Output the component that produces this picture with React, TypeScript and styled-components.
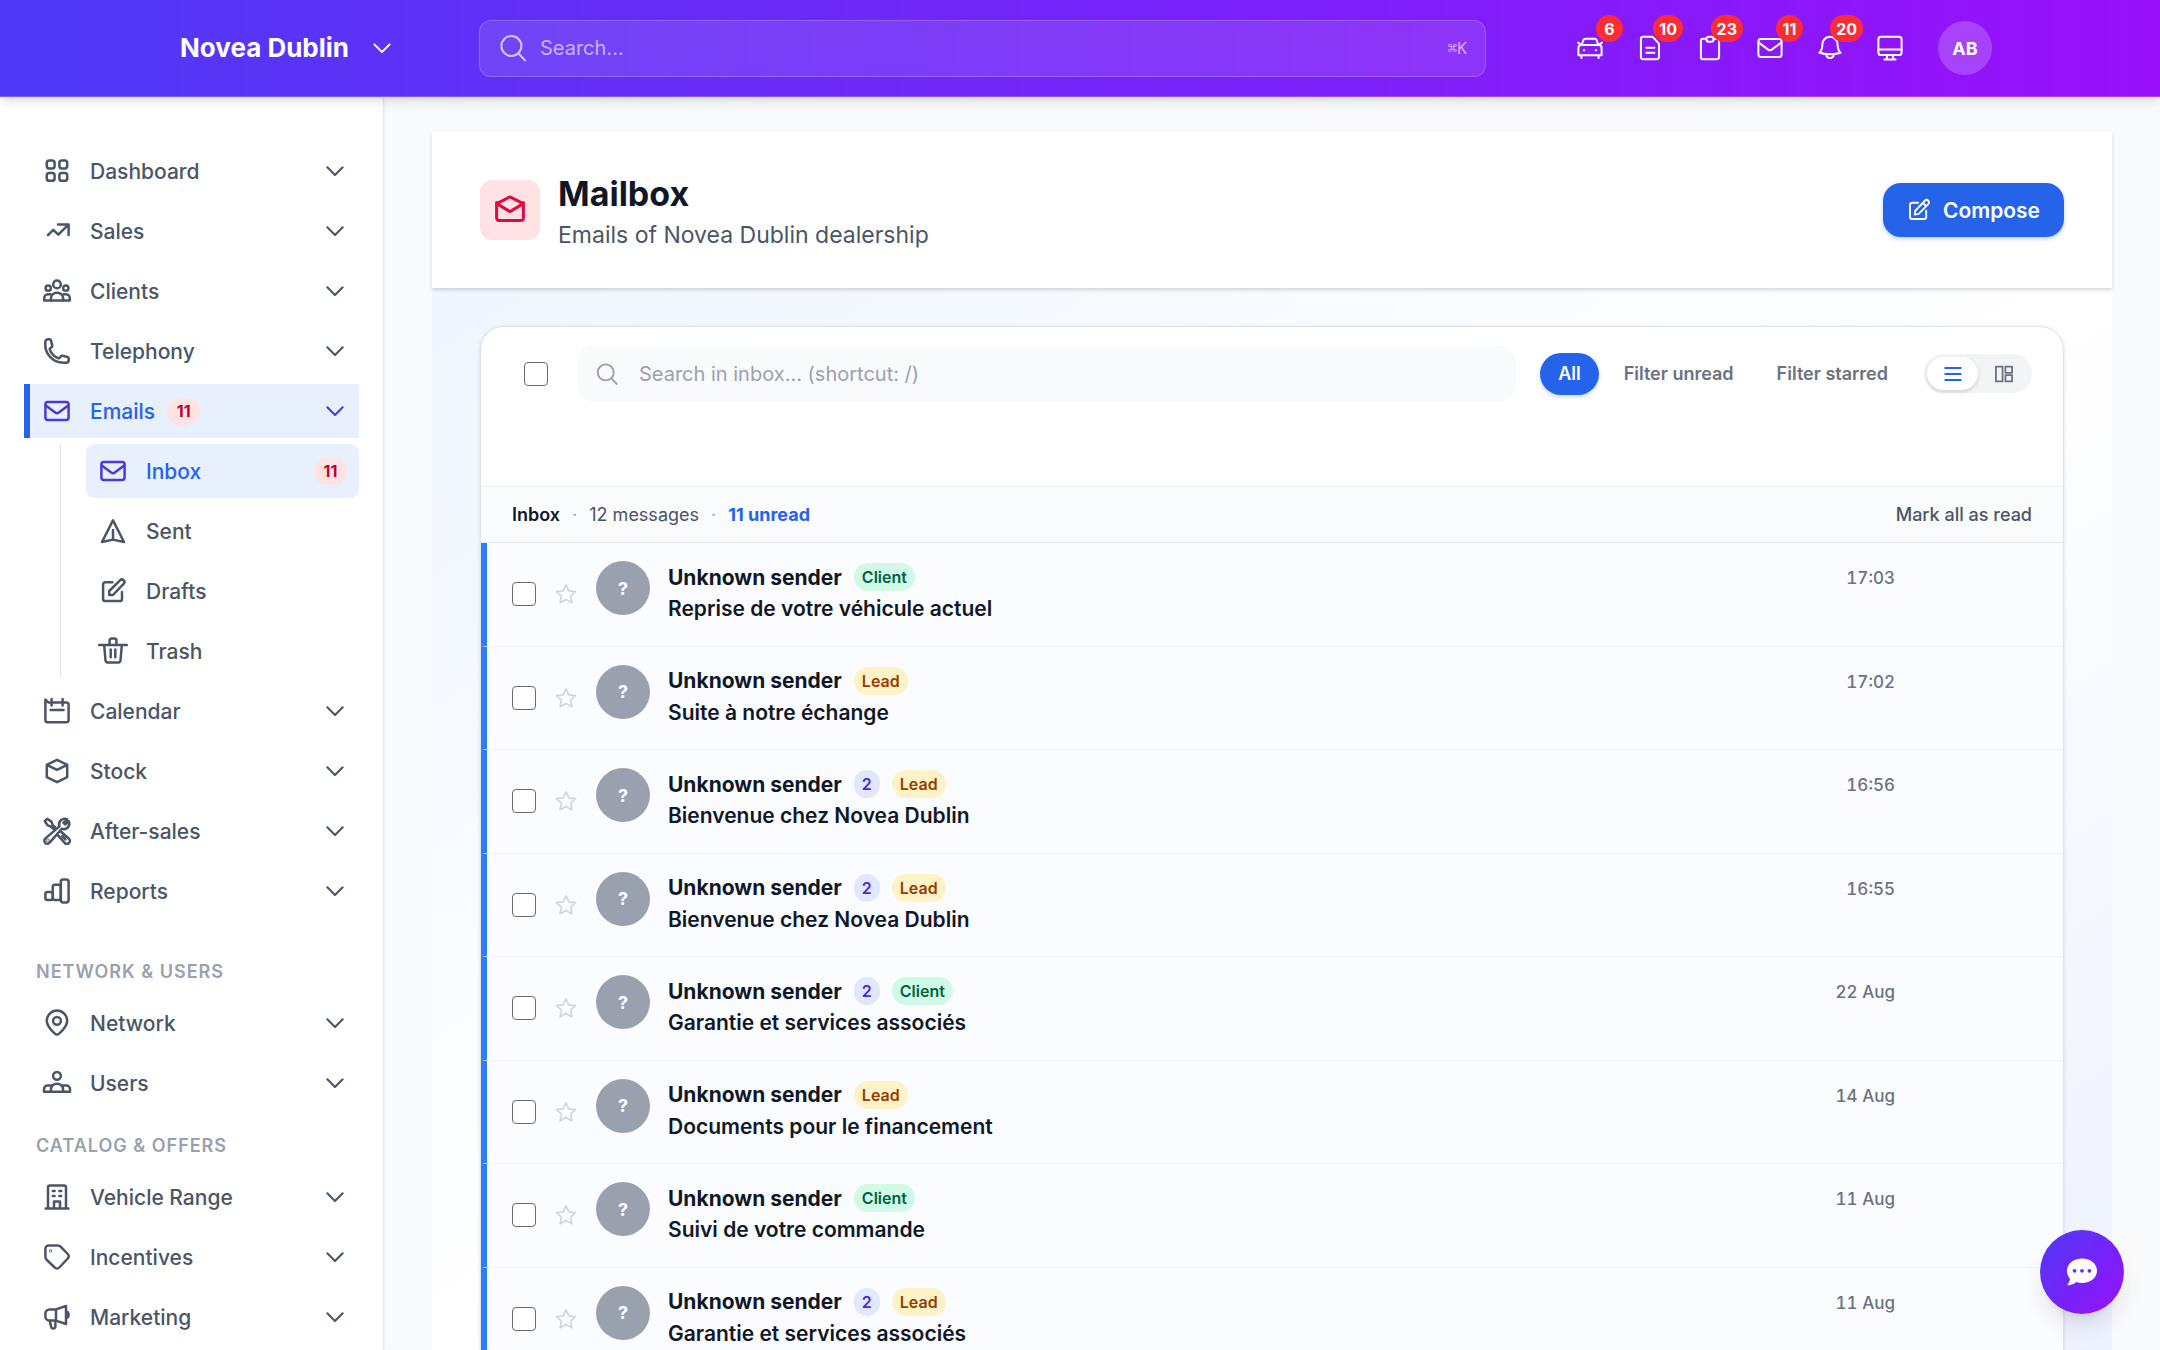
import React from "react";
import styled, { createGlobalStyle, css } from "styled-components";

/* ---------- icons: 30 x 30 line drawings ---------- */

const shapes = {
  dashboard: (
    <>
      <rect x="4.8" y="4.6" width="7.8" height="7.8" rx="2.4" />
      <rect x="17.4" y="4.6" width="7.8" height="7.8" rx="2.4" />
      <rect x="4.8" y="17" width="7.8" height="7.8" rx="2.4" />
      <rect x="17.4" y="17" width="7.8" height="7.8" rx="2.4" />
    </>
  ),
  trend: <path d="M6 19.2 11.3 13.8 16.3 18.6 26.2 8.8M16 8.4H26.6V19" />,
  group: (
    <>
      <circle cx="15" cy="8.4" r="3.8" />
      <circle cx="6.2" cy="12.2" r="2.6" />
      <circle cx="23.8" cy="12.2" r="2.6" />
      <path d="M8.9 24.4V22a6.1 5.2 0 0 1 12.2 0v2.4" />
      <path d="M8.4 18.2H6a3.9 3.9 0 0 0-3.8 4v2.2h25.6v-2.2a3.9 3.9 0 0 0-3.8-4h-2.4" />
    </>
  ),
  phone: (
    <path
      transform="translate(.6 .6) scale(1.2)"
      strokeWidth="2.1"
      d="M2.25 6.75c0 8.284 6.716 15 15 15h2.25a2.25 2.25 0 0 0 2.25-2.25v-1.372c0-.516-.351-.966-.852-1.091l-4.423-1.106c-.44-.11-.902.055-1.173.417l-.97 1.293c-.282.376-.769.542-1.21.38a12.035 12.035 0 0 1-7.143-7.143c-.162-.441.004-.928.38-1.21l1.293-.97c.363-.271.527-.734.417-1.173L6.963 3.102a1.125 1.125 0 0 0-1.091-.852H4.5A2.25 2.25 0 0 0 2.25 4.5v2.25Z"
    />
  ),
  mail: (
    <>
      <rect x="3.4" y="6" width="23.2" height="18" rx="2.4" />
      <path d="M3.8 9.6 13.2 16.6Q15 18 16.8 16.6L26.2 9.6" />
    </>
  ),
  send: <path d="M15 4.4 4 26 15 23.6 26 26ZM15 14v9.4" />,
  edit: (
    <>
      <path d="M14.4 6.3H7.3a2.2 2.2 0 0 0-2.2 2.2v14.4a2.2 2.2 0 0 0 2.2 2.2h14.5a2.2 2.2 0 0 0 2.2-2.2V16" />
      <path d="M11.2 19v-4L22 4.3a2.5 2.5 0 0 1 3.6 3.6L15 19Z" />
    </>
  ),
  trash: (
    <>
      <path d="M1 9h28M11.6 8.6V4.4a1.9 1.9 0 0 1 1.9-1.900h3a1.900 1.900 0 0 1 1.900 1.900v4.200" />
      <path d="M6.2 9.4 7.5 24.4a2.2 2.2 0 0 0 2.2 2h10.6a2.2 2.2 0 0 0 2.2-2l1.3-15M12.7 13.6v7.6M17.3 13.6v7.6" />
    </>
  ),
  calendar: (
    <>
      <path d="M3.4 3.6v20.3a2.3 2.3 0 0 0 2.3 2.3h18.6a2.3 2.3 0 0 0 2.3-2.3V8.7a2.3 2.3 0 0 0-2.3-2.3H6.4Z" />
      <path d="M9.6 3v6.6M20.6 3v6.6M8.6 14h13" />
    </>
  ),
  box: <path d="M15 3.8 25.2 8.8V21.2L15 26.2 4.8 21.2V8.8ZM4.8 8.8 15 13.8 25.2 8.8" />,
  tools: (
    <>
      <path d="M12 13.4 8.6 10.4 5.6 9.4 2.8 5.2 5.2 2.8 9.4 5.6 10.6 8.8 13.4 11.4" />
      <path d="M25.2 3.4A5.6 5.6 0 0 0 17.4 10.4L3.2 22.6a2.9 2.9 0 0 0 4.2 4.2L19.8 12.8A5.6 5.6 0 0 0 26.8 5.2L23.4 8.4 21.4 6.8Z" />
      <path d="M19.4 16 27 22.8a2.9 2.9 0 0 1-4.2 4.2L16.2 19.6M20.2 20.2l3.2 3.2" />
      <circle cx="5.9" cy="24.2" r=".4" />
    </>
  ),
  bars: (
    <>
      <rect x="3.4" y="16" width="7.4" height="8" rx="2" />
      <rect x="10.8" y="8.8" width="8" height="15.2" rx="2" />
      <rect x="18.8" y="3.6" width="7.8" height="22.8" rx="2.4" />
    </>
  ),
  pin: (
    <>
      <path d="M15 26.6c-.9 0-1.6-.5-2.4-1.2C9.8 22.9 4.8 18.4 4.8 12.8a10.2 10.2 0 0 1 20.4 0c0 5.6-5 10.1-7.8 12.6-.8.7-1.5 1.2-2.4 1.2Z" />
      <circle cx="15" cy="12.8" r="3.9" />
    </>
  ),
  users: (
    <>
      <circle cx="15" cy="7.8" r="3.9" />
      <path d="M8.9 23.8v-2.4a6.1 5.6 0 0 1 12.2 0v2.4" />
      <path d="M9.4 17.6H5.6a3.6 3.6 0 0 0-3.6 3.6v2.6h26v-2.6a3.6 3.6 0 0 0-3.6-3.6h-3.8" />
    </>
  ),
  building: (
    <>
      <path d="M3.6 26.6h22.8M6 26.4V5.6a2 2 0 0 1 2-2h14a2 2 0 0 1 2 2v20.8M12 26.4v-6.8h6v6.8" />
      <path d="M10.8 9h1.8M17.4 9h1.8M10.8 14h1.8M17.4 14h1.8" />
    </>
  ),
  tag: (
    <>
      <path d="M3.4 6.8a3.4 3.4 0 0 1 3.4-3.4h9a4 4 0 0 1 2.8 1.2l7.2 7.4a3.2 3.2 0 0 1 0 4.5l-8.5 9a3.2 3.2 0 0 1-4.6 0L4.9 18a4 4 0 0 1-1.500-3Z" />
      <circle cx="8.6" cy="8.8" r=".4" />
    </>
  ),
  megaphone: (
    <>
      <path d="M14 7.4H7.6a4.2 4.2 0 0 0-4.2 4.2v2.8a4.2 4.2 0 0 0 4.2 4.2H14ZM14 7.4 24 4v18l-10-3.4M24 9.4a3.4 3.4 0 0 1 2.6 3.4A3.4 3.4 0 0 1 24 16.2" />
      <path d="M7.8 18.8 9.2 25a2 2 0 0 0 2 1.6 2.4 2.4 0 0 0 2.2-2.8V18.8" />
    </>
  ),
  car: (
    <>
      <path d="M6.6 12 8.4 7.2a2.2 2.2 0 0 1 2-1.4h9.2a2.2 2.2 0 0 1 2 1.4L23.4 12M3 9.6l3 2M27 9.6l-3 2" />
      <path d="M6.4 12h17.2a3 3 0 0 1 3 3v7.2H3.4V15a3 3 0 0 1 3-3ZM6.4 22.4V25M23.6 22.4V25" />
      <path d="M8.8 17.3h.4M20.8 17.3h.4" />
    </>
  ),
  doc: (
    <path d="M8.2 3.8h8.6a2 2 0 0 1 1.4.6l5.2 5.6a2 2 0 0 1 .6 1.4v12.6a2.3 2.3 0 0 1-2.3 2.3H8.2a2.3 2.3 0 0 1-2.3-2.3V6.1a2.3 2.3 0 0 1 2.3-2.3ZM11.4 14.7h8M11.4 19.7h8" />
  ),
  clipboard: (
    <>
      <path d="M11 5.8H8.2a2.3 2.3 0 0 0-2.3 2.3v15.8a2.3 2.3 0 0 0 2.3 2.3h13.6a2.3 2.3 0 0 0 2.3-2.3V8.1a2.3 2.3 0 0 0-2.3-2.3H19" />
      <rect x="11.4" y="3.8" width="7.2" height="5" rx="2.5" />
    </>
  ),
  bell: (
    <path d="M4.4 19.8c2.6-2.6 3-5.2 3-8.6a7.6 7.4 0 0 1 15.2 0c0 3.4.4 6 3 8.6-3.4 1.1-6.8 1.5-10.6 1.5s-7.2-.4-10.6-1.5ZM11 21.6a4.1 4.4 0 0 0 8 0" />
  ),
  monitor: (
    <>
      <rect x="3.4" y="3.8" width="23.2" height="18.2" rx="2.6" />
      <path d="M3.4 16.4h23.2M12.4 22l-.8 4.4M17.6 22l.8 4.4M9.4 26.6h11.2" />
    </>
  ),
  mailOpen: (
    <>
      <path d="M1.8 8.6 15 1.9 28.2 8.6 15 16.6Z" />
      <path d="M1.6 7.4V23a2.6 2.6 0 0 0 2.6 2.6h21.6a2.6 2.6 0 0 0 2.6-2.6V7.4" />
    </>
  ),
  compose: (
    <>
      <path d="M14 6H6.400A2.600 2.600 0 0 0 3.800 8.600v15A2.600 2.600 0 0 0 6.400 26.200h15a2.600 2.600 0 0 0 2.600-2.600V16" />
      <path d="M9.600 20.800l.9-5L22.400 3.400a2.900 2.900 0 0 1 4.200 4.200L14.600 19.900ZM20 6.200l4 4" />
    </>
  ),
  search: <path d="M21 21 27 27.4M23.4 13A10 10 0 1 1 3.4 13a10 10 0 0 1 20 0Z" />,
  chevron: <path d="M5.4 10.4 15 20l9.6-9.6" />,
  star: (
    <path d="M15 3.6 18.5 11 26.8 12 20.7 17.6 22.3 25.8 15 21.8 7.7 25.8 9.3 17.6 3.2 12 11.5 11Z" />
  ),
  list: <path d="M2 5h26M2 15h26M2 25h26" />,
  columns: (
    <path d="M1.6 2.6h11v24.8h-11ZM17.4 2.6h11v10.6h-11ZM17.4 16.8h11v10.6h-11Z" />
  ),
};

type IconName = keyof typeof shapes;

const Svg = styled.svg<{ $size: number }>`
  display: block;
  flex: none;
  width: ${(p) => p.$size}px;
  height: ${(p) => p.$size}px;
  fill: none;
  stroke: currentColor;
  stroke-linecap: round;
  stroke-linejoin: round;
`;

function Icon({ name, size = 30, weight = 2.5 }: { name: IconName; size?: number; weight?: number }) {
  return (
    <Svg viewBox="0 0 30 30" $size={size} strokeWidth={weight} aria-hidden="true">
      {shapes[name]}
    </Svg>
  );
}

/* ---------- page frame ---------- */

const GlobalStyle = createGlobalStyle`
  *, *::before, *::after { box-sizing: border-box; }
  body { margin: 0; background: #f9fafb; }
  body, button, input { font-family: Inter, "Liberation Sans", sans-serif; }
  button { border: 0; padding: 0; background: none; color: inherit; cursor: pointer; }
  ul { list-style: none; margin: 0; padding: 0; }
  h1, h2, p { margin: 0; }
  a { color: inherit; text-decoration: none; }
`;

const Page = styled.div`
  display: flex;
  flex-direction: column;
  height: 100vh;
  overflow: hidden;
  color: #101828;
  font-size: 21px;
`;

const Body = styled.div`
  display: flex;
  flex: 1;
  min-height: 0;
`;

/* ---------- top bar ---------- */

const TopBar = styled.header`
  position: relative;
  z-index: 2;
  flex: none;
  border-bottom: 1px solid rgba(255, 255, 255, 0.2);
  background: linear-gradient(to right, #4f39f6, #9810fa);
  box-shadow: 0 6px 9px -1px rgba(0, 0, 0, 0.1), 0 3px 6px -3px rgba(0, 0, 0, 0.1);
  color: #fff;
`;

const TopInner = styled.div`
  display: flex;
  align-items: center;
  max-width: 1824px;
  height: 96px;
  margin: 0 auto;
`;

const StoreColumn = styled.div`
  flex: none;
  width: 311px;
`;

const StoreButton = styled.button`
  display: flex;
  align-items: center;
  gap: 21px;
  padding: 6px 12px;
  font-size: 26px;
  line-height: 36px;
  font-weight: 700;
`;

const GlobalSearch = styled.label`
  display: flex;
  flex: 1;
  align-items: center;
  gap: 12px;
  height: 57px;
  padding: 0 18px;
  border: 1px solid rgba(255, 255, 255, 0.2);
  border-radius: 12px;
  background: rgba(255, 255, 255, 0.1);
  color: rgba(255, 255, 255, 0.7);
`;

const searchField = css`
  flex: 1;
  min-width: 0;
  padding: 0;
  border: 0;
  outline: 0;
  background: none;
  font-size: 20px;
  line-height: 30px;
`;

const GlobalInput = styled.input`
  ${searchField}
  color: #fff;
  &::placeholder { color: rgba(255, 255, 255, 0.6); opacity: 1; }
`;

const Shortcut = styled.kbd`
  color: rgba(255, 255, 255, 0.6);
  font-family: "DejaVu Sans Mono", monospace;
  font-size: 16px;
`;

const TopActions = styled.nav`
  display: flex;
  flex: none;
  align-items: center;
  justify-content: flex-end;
  gap: 6px;
  width: 506px;
`;

const TopButton = styled.button`
  position: relative;
  display: grid;
  place-items: center;
  width: 54px;
  height: 54px;
`;

const Count = styled.span`
  position: absolute;
  top: -6px;
  right: -6px;
  min-width: 27px;
  height: 27px;
  padding: 0 6px;
  border-radius: 14px;
  background: #fb2c36;
  font-size: 16px;
  line-height: 28px;
  font-weight: 700;
  text-align: center;
`;

const Profile = styled.button`
  width: 54px;
  height: 54px;
  margin-left: 15px;
  border-radius: 50%;
  background: rgba(255, 255, 255, 0.2);
  font-size: 18px;
  font-weight: 700;
`;

/* ---------- sidebar ---------- */

const Sidebar = styled.nav`
  flex: none;
  width: 384px;
  padding: 47px 24px 0;
  border-right: 1px solid #e5e7eb;
  background: #fff;
  color: #4a5565;
  box-shadow: 0 1px 4px rgba(0, 0, 0, 0.08);
  overflow: hidden;
`;

const NavList = styled.ul`
  display: flex;
  flex-direction: column;
  gap: 6px;
`;

const NavHeading = styled.h2<{ $gap: number }>`
  margin: ${(p) => p.$gap}px 0 11px 12px;
  color: #99a1af;
  font-size: 18px;
  line-height: 27px;
  font-weight: 600;
  letter-spacing: 1px;
  text-transform: uppercase;
`;

const NavLink = styled.a<{ $active?: boolean; $sub?: boolean }>`
  display: flex;
  align-items: center;
  gap: 18px;
  height: 54px;
  padding: 0 12px;
  border-left: ${(p) => (p.$sub ? 0 : 6)}px solid ${(p) => (p.$active ? "#2563eb" : "transparent")};
  border-radius: ${(p) => (p.$sub ? 9 : 0)}px;
  background: ${(p) => (p.$active ? "#e8effd" : "transparent")};
  font-weight: 500;

  > svg { color: ${(p) => (p.$active ? "#4f39d6" : "inherit")}; }
`;

const NavText = styled.span<{ $active?: boolean }>`
  display: flex;
  flex: 1;
  align-items: center;
  gap: 12px;
  color: ${(p) => (p.$active ? "#2563eb" : "inherit")};
`;

const SubList = styled(NavList)`
  margin: 6px 0 0 36px;
  padding-left: 25px;
  border-left: 1px solid #e0e3e8;
`;

const RedPill = styled.span`
  min-width: 33px;
  padding: 0 9px;
  border-radius: 14px;
  background: #ffe2e2;
  color: #b8003a;
  font-size: 16px;
  line-height: 27px;
  font-weight: 700;
  text-align: center;
`;

/* ---------- main column ---------- */

const Main = styled.main`
  display: flex;
  flex: 1;
  flex-direction: column;
  min-width: 0;
  padding: 35px 48px 0;
`;

const PageHeader = styled.section`
  position: relative;
  z-index: 1;
  display: flex;
  flex: none;
  align-items: center;
  gap: 18px;
  height: 156px;
  padding: 0 48px;
  background: #fff;
  box-shadow: 0 2px 4px rgba(0, 0, 0, 0.16);
`;

const HeaderIcon = styled.div`
  display: grid;
  place-items: center;
  width: 60px;
  height: 60px;
  border-radius: 12px;
  background: #ffe2e5;
  color: #e00a45;
`;

const HeaderText = styled.div`
  flex: 1;
`;

const Title = styled.h1`
  font-size: 34px;
  line-height: 45px;
  font-weight: 700;
`;

const Subtitle = styled.p`
  margin-top: 4px;
  color: #4a5565;
  font-size: 23px;
  line-height: 30px;
`;

const ComposeButton = styled.button`
  display: flex;
  align-items: center;
  gap: 12px;
  height: 54px;
  padding: 0 24px;
  border-radius: 18px;
  background: #2563eb;
  box-shadow: 0 2px 4px rgba(37, 99, 235, 0.3);
  color: #fff;
  font-size: 21px;
  font-weight: 600;
`;

const Canvas = styled.div`
  flex: 1;
  min-height: 0;
  padding: 38px 48px 0;
  background: linear-gradient(to bottom right, #eff6ff, #ffffff, #eef2ff);
  overflow: hidden;
`;

const Card = styled.section`
  border: 1px solid #e0e3e8;
  border-radius: 24px;
  background: #fff;
  box-shadow: 0 1px 4px rgba(0, 0, 0, 0.12);
  overflow: hidden;
`;

const Toolbar = styled.div`
  display: flex;
  align-items: center;
  gap: 24px;
  padding: 18px 31px 84px;
`;

const Checkbox = styled.input.attrs({ type: "checkbox" })`
  flex: none;
  width: 24px;
  height: 24px;
  margin: 0;
  appearance: none;
  border: 1px solid #6a6a6a;
  border-radius: 4px;
  background: #fff;
`;

const SelectAll = styled.div`
  display: flex;
  padding: 0 5px 0 12px;
`;

const InboxSearch = styled.label`
  display: flex;
  flex: 1;
  align-items: center;
  gap: 20px;
  height: 57px;
  padding: 0 18px;
  border-radius: 18px;
  background: #f9fafb;
  color: #99a1af;
`;

const InboxInput = styled.input`
  ${searchField}
  color: #101828;
  &::placeholder { color: #99a1af; opacity: 1; }
`;

const Filters = styled.div`
  display: flex;
  gap: 7px;
  margin-right: -6px;
`;

const FilterButton = styled.button<{ $active?: boolean }>`
  height: 42px;
  padding: 0 18px;
  border-radius: 21px;
  background: ${(p) => (p.$active ? "#2563eb" : "transparent")};
  box-shadow: ${(p) => (p.$active ? "0 2px 4px rgba(37, 99, 235, 0.25)" : "none")};
  color: ${(p) => (p.$active ? "#fff" : "#6a7282")};
  font-size: 18px;
  font-weight: 600;
`;

const ViewToggle = styled.div`
  display: flex;
  padding: 3px;
  border-radius: 20px;
  background: #f3f4f6;
`;

const ViewButton = styled.button<{ $active?: boolean }>`
  display: grid;
  place-items: center;
  width: 51px;
  height: 33px;
  border-radius: 17px;
  background: ${(p) => (p.$active ? "#fff" : "transparent")};
  box-shadow: ${(p) => (p.$active ? "0 2px 4px rgba(0, 0, 0, 0.14)" : "none")};
  color: ${(p) => (p.$active ? "#2563eb" : "#6a7282")};
`;

const Summary = styled.div`
  display: flex;
  align-items: center;
  gap: 12px;
  height: 57px;
  padding: 0 31px;
  border-top: 1px solid #f0f1f4;
  border-bottom: 1px solid #e3e6ea;
  background: #fafbfc;
  color: #4a5565;
  font-size: 18px;
`;

const Folder = styled.h2`
  color: #101828;
  font-size: 18px;
  font-weight: 600;
`;

const Dot = styled.span`
  color: #99a1af;
`;

const Unread = styled.span`
  color: #2563eb;
  font-weight: 700;
`;

const MarkRead = styled.button`
  margin-left: auto;
  font-size: 18px;
  font-weight: 500;
`;

/* ---------- message rows ---------- */

const Row = styled.li`
  display: flex;
  align-items: flex-start;
  gap: 18px;
  padding: 18px 168px 18px 25px;
  border-left: 6px solid #2b7fff;
  border-bottom: 1px solid #f0f2f5;
  background: #fbfcff;

  > input, > button { align-self: center; }
`;

const StarButton = styled.button`
  color: #d1d5dc;
`;

const Avatar = styled.span`
  display: grid;
  flex: none;
  place-items: center;
  width: 54px;
  height: 54px;
  border-radius: 50%;
  background: #99a1af;
  color: #fff;
  font-size: 18px;
  font-weight: 700;
`;

const Message = styled.div`
  flex: 1;
  min-width: 0;
  padding-bottom: 3px;
`;

const SenderLine = styled.div`
  display: flex;
  align-items: center;
  gap: 12px;
  height: 32px;
  font-weight: 700;
`;

const Subject = styled.p`
  line-height: 1.5;
  font-weight: 600;
`;

const tones = {
  Client: ["#d0fae5", "#006045"],
  Lead: ["#fef3c6", "#973c00"],
  thread: ["#e0e7ff", "#432dd7"],
};

const Pill = styled.span<{ $tone: keyof typeof tones }>`
  padding: 0 8px;
  border-radius: 14px;
  background: ${(p) => tones[p.$tone][0]};
  color: ${(p) => tones[p.$tone][1]};
  font-size: 16px;
  line-height: 28px;
  font-weight: 600;
`;

const When = styled.time`
  color: #6a7282;
  font-size: 17px;
  line-height: 34px;
  font-weight: 500;
  font-variant-numeric: tabular-nums;
`;

const ChatButton = styled.button`
  position: fixed;
  right: 36px;
  bottom: 36px;
  z-index: 3;
  display: grid;
  place-items: center;
  width: 84px;
  height: 84px;
  border-radius: 50%;
  background: linear-gradient(to bottom right, #4f39f6, #9810fa);
  box-shadow: 0 15px 23px -5px rgba(0, 0, 0, 0.12), 0 6px 9px -6px rgba(0, 0, 0, 0.12);
`;

/* ---------- data ---------- */

const topItems: { icon: IconName; label: string; count?: number }[] = [
  { icon: "car", label: "Vehicles", count: 6 },
  { icon: "doc", label: "Documents", count: 10 },
  { icon: "clipboard", label: "Tasks", count: 23 },
  { icon: "mail", label: "Emails", count: 11 },
  { icon: "bell", label: "Notifications", count: 20 },
  { icon: "monitor", label: "Display" },
];

type Entry = { icon: IconName; label: string };

const mailFolders: Entry[] = [
  { icon: "mail", label: "Inbox" },
  { icon: "send", label: "Sent" },
  { icon: "edit", label: "Drafts" },
  { icon: "trash", label: "Trash" },
];

const navGroups: { title?: string; gap: number; items: Entry[] }[] = [
  {
    gap: 0,
    items: [
      { icon: "dashboard", label: "Dashboard" },
      { icon: "trend", label: "Sales" },
      { icon: "group", label: "Clients" },
      { icon: "phone", label: "Telephony" },
      { icon: "mail", label: "Emails" },
      { icon: "calendar", label: "Calendar" },
      { icon: "box", label: "Stock" },
      { icon: "tools", label: "After-sales" },
      { icon: "bars", label: "Reports" },
    ],
  },
  {
    title: "Network & Users",
    gap: 40,
    items: [
      { icon: "pin", label: "Network" },
      { icon: "users", label: "Users" },
    ],
  },
  {
    title: "Catalog & Offers",
    gap: 22,
    items: [
      { icon: "building", label: "Vehicle Range" },
      { icon: "tag", label: "Incentives" },
      { icon: "megaphone", label: "Marketing" },
    ],
  },
];

const messages: { tag: "Client" | "Lead"; thread?: number; subject: string; when: string }[] = [
  { tag: "Client", subject: "Reprise de votre véhicule actuel", when: "17:03" },
  { tag: "Lead", subject: "Suite à notre échange", when: "17:02" },
  { tag: "Lead", thread: 2, subject: "Bienvenue chez Novea Dublin", when: "16:56" },
  { tag: "Lead", thread: 2, subject: "Bienvenue chez Novea Dublin", when: "16:55" },
  { tag: "Client", thread: 2, subject: "Garantie et services associés", when: "22 Aug" },
  { tag: "Lead", subject: "Documents pour le financement", when: "14 Aug" },
  { tag: "Client", subject: "Suivi de votre commande", when: "11 Aug" },
  { tag: "Lead", thread: 2, subject: "Garantie et services associés", when: "11 Aug" },
];

/* ---------- view ---------- */

function NavEntry({ icon, label }: Entry) {
  const active = label === "Emails";
  return (
    <li>
      <NavLink href="#" $active={active}>
        <Icon name={icon} />
        <NavText $active={active}>
          {label}
          {active && <RedPill>11</RedPill>}
        </NavText>
        <Icon name="chevron" size={24} weight={2.6} />
      </NavLink>
      {active && (
        <SubList>
          {mailFolders.map((f) => (
            <li key={f.label}>
              <NavLink href="#" $sub $active={f.label === "Inbox"}>
                <Icon name={f.icon} />
                <NavText $active={f.label === "Inbox"}>{f.label}</NavText>
                {f.label === "Inbox" && <RedPill>11</RedPill>}
              </NavLink>
            </li>
          ))}
        </SubList>
      )}
    </li>
  );
}

export default function App() {
  return (
    <Page>
      <GlobalStyle />
      <TopBar>
        <TopInner>
          <StoreColumn>
            <StoreButton>
              Novea Dublin
              <Icon name="chevron" size={24} weight={2.4} />
            </StoreButton>
          </StoreColumn>
          <GlobalSearch>
            <Icon name="search" size={30} weight={2} />
            <GlobalInput type="text" placeholder="Search..." aria-label="Search" />
            <Shortcut>⌘K</Shortcut>
          </GlobalSearch>
          <TopActions aria-label="Quick access">
            {topItems.map((t) => (
              <TopButton key={t.label} aria-label={t.label}>
                <Icon name={t.icon} weight={2} />
                {t.count && <Count>{t.count}</Count>}
              </TopButton>
            ))}
            <Profile>AB</Profile>
          </TopActions>
        </TopInner>
      </TopBar>

      <Body>
        <Sidebar aria-label="Main menu">
          {navGroups.map((g) => (
            <React.Fragment key={g.gap}>
              {g.title && <NavHeading $gap={g.gap}>{g.title}</NavHeading>}
              <NavList>
                {g.items.map((i) => (
                  <NavEntry key={i.label} {...i} />
                ))}
              </NavList>
            </React.Fragment>
          ))}
        </Sidebar>

        <Main>
          <PageHeader>
            <HeaderIcon>
              <Icon name="mailOpen" weight={3} />
            </HeaderIcon>
            <HeaderText>
              <Title>Mailbox</Title>
              <Subtitle>Emails of Novea Dublin dealership</Subtitle>
            </HeaderText>
            <ComposeButton>
              <Icon name="compose" size={24} weight={2.4} />
              Compose
            </ComposeButton>
          </PageHeader>

          <Canvas>
            <Card>
              <Toolbar>
                <SelectAll>
                  <Checkbox aria-label="Select all messages" />
                </SelectAll>
                <InboxSearch>
                  <Icon name="search" size={24} weight={2.4} />
                  <InboxInput
                    type="text"
                    placeholder="Search in inbox... (shortcut: /)"
                    aria-label="Search in inbox"
                  />
                </InboxSearch>
                <Filters>
                  <FilterButton $active>All</FilterButton>
                  <FilterButton>Filter unread</FilterButton>
                  <FilterButton>Filter starred</FilterButton>
                </Filters>
                <ViewToggle>
                  <ViewButton $active aria-label="List view">
                    <Icon name="list" size={18} weight={3} />
                  </ViewButton>
                  <ViewButton aria-label="Split view">
                    <Icon name="columns" size={18} weight={3} />
                  </ViewButton>
                </ViewToggle>
              </Toolbar>

              <Summary>
                <Folder>Inbox</Folder>
                <Dot>·</Dot>
                <span>12 messages</span>
                <Dot>·</Dot>
                <Unread>11 unread</Unread>
                <MarkRead>Mark all as read</MarkRead>
              </Summary>

              <ul>
                {messages.map((m, i) => (
                  <Row key={i}>
                    <Checkbox aria-label={`Select ${m.subject}`} />
                    <StarButton aria-label="Star">
                      <Icon name="star" size={24} weight={2.1} />
                    </StarButton>
                    <Avatar>?</Avatar>
                    <Message>
                      <SenderLine>
                        Unknown sender
                        {m.thread && <Pill $tone="thread">{m.thread}</Pill>}
                        <Pill $tone={m.tag}>{m.tag}</Pill>
                      </SenderLine>
                      <Subject>{m.subject}</Subject>
                    </Message>
                    <When>{m.when}</When>
                  </Row>
                ))}
              </ul>
            </Card>
          </Canvas>
        </Main>
      </Body>

      <ChatButton aria-label="Open chat">
        <svg width="30" height="28" viewBox="0 0 30 28" aria-hidden="true">
          <path
            fill="#fff"
            d="M15 .5C23.4.5 30 5.8 30 12.7S23.4 24.9 15 24.9c-2 0-4-.3-5.7-.9C7.4 25.8 4 27.3.2 27.2c1.4-1.7 2.6-3.8 2.8-6.4C1.1 18.6 0 15.8 0 12.7 0 5.8 6.6.5 15 .5Z"
          />
          <g fill="#6a2cf8">
            <circle cx="7.6" cy="12.8" r="1.9" />
            <circle cx="15" cy="12.8" r="1.9" />
            <circle cx="22.4" cy="12.8" r="1.9" />
          </g>
        </svg>
      </ChatButton>
    </Page>
  );
}
